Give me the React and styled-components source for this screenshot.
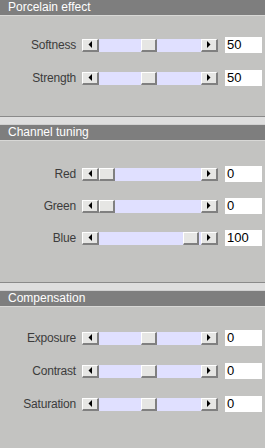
import React from "react"
import styled, { createGlobalStyle } from "styled-components"

const GlobalStyle = createGlobalStyle`
  html, body {
    margin: 0;
    padding: 0;
    background: #c3c3c1;
  }
  body {
    font-family: "Liberation Sans", Arial, sans-serif;
  }
`

const sections = [
  {
    title: "Porcelain effect",
    padTop: 21,
    padBottom: 30,
    gap: 17,
    rows: [
      { label: "Softness", value: 50 },
      { label: "Strength", value: 50 },
    ],
  },
  {
    title: "Channel tuning",
    padTop: 25,
    padBottom: 36,
    gap: 16,
    rows: [
      { label: "Red", value: 0 },
      { label: "Green", value: 0 },
      { label: "Blue", value: 100 },
    ],
  },
  {
    title: "Compensation",
    padTop: 23,
    padBottom: 30,
    gap: 17,
    rows: [
      { label: "Exposure", value: 0, pos: 50 },
      { label: "Contrast", value: 0, pos: 50 },
      { label: "Saturation", value: 0, pos: 50 },
    ],
    last: true,
  },
]

const Scroll = ({ pos }) => (
  <ScrollBar>
    <ArrowButton>
      <svg width="4" height="7" viewBox="0 0 4 7">
        <polygon points="4,0 4,7 0.5,3.5" fill="#000" />
      </svg>
    </ArrowButton>
    <Track>
      <Thumb style={{ left: `${(pos / 100) * 84}px` }} />
    </Track>
    <ArrowButton>
      <svg width="4" height="7" viewBox="0 0 4 7">
        <polygon points="0,0 0,7 3.5,3.5" fill="#000" />
      </svg>
    </ArrowButton>
  </ScrollBar>
)

const App = () => (
  <>
    <GlobalStyle />
    <Panel>
      {sections.map((s) => (
        <Section key={s.title} last={s.last}>
          <Header>{s.title}</Header>
          <Body padTop={s.padTop} padBottom={s.padBottom} gap={s.gap}>
            {s.rows.map((r) => (
              <Row key={r.label}>
                <Label>{r.label}</Label>
                <Scroll pos={r.pos !== undefined ? r.pos : r.value} />
                <ValueBox>{r.value}</ValueBox>
              </Row>
            ))}
          </Body>
          {!s.last && <Separator />}
        </Section>
      ))}
    </Panel>
  </>
)

const Panel = styled.div`
  width: 265px;
  height: 448px;
  overflow: hidden;
  display: flex;
  flex-direction: column;
`

const Section = styled.div`
  display: flex;
  flex-direction: column;
`

const Header = styled.div`
  height: 15px;
  line-height: 15px;
  background: #7e7e7e;
  color: #fff;
  font-size: 12px;
  padding-left: 8px;
  border-bottom: 1px solid #d8d8d6;
`

const Body = styled.div`
  display: flex;
  flex-direction: column;
  gap: ${(p) => p.gap}px;
  padding-top: ${(p) => p.padTop}px;
  padding-bottom: ${(p) => p.padBottom}px;
`

const Separator = styled.div`
  height: 7px;
  border-top: 1px solid #8a8a8a;
  background: #dedede;
  border-bottom: 1px solid #d0d0d0;
`

const Row = styled.div`
  display: grid;
  grid-template-columns: 76px 136px 38px;
  column-gap: 6px;
  align-items: center;
  height: 16px;
`

const Label = styled.div`
  text-align: right;
  font-size: 12px;
  color: #3c3c3c;
  letter-spacing: -0.2px;
`

const ScrollBar = styled.div`
  display: flex;
  height: 13px;
  width: 136px;
`

const ArrowButton = styled.div`
  width: 14px;
  height: 10px;
  flex: none;
  background: #e6e6e4;
  border-top: 1px solid #fff;
  border-left: 1px solid #fff;
  border-right: 2px solid #808080;
  border-bottom: 2px solid #808080;
  display: flex;
  align-items: center;
  justify-content: center;
`

const Track = styled.div`
  position: relative;
  flex: 1;
  background: #e0e0ff;
`

const Thumb = styled.div`
  position: absolute;
  top: 0;
  width: 13px;
  height: 10px;
  background: #e6e6e4;
  border-top: 1px solid #fff;
  border-left: 1px solid #fff;
  border-right: 2px solid #808080;
  border-bottom: 2px solid #808080;
`

const ValueBox = styled.div`
  margin-left: 1px;
  height: 16px;
  background: #fff;
  font-size: 13px;
  line-height: 16px;
  padding-left: 2px;
  color: #000;
`

export default App
